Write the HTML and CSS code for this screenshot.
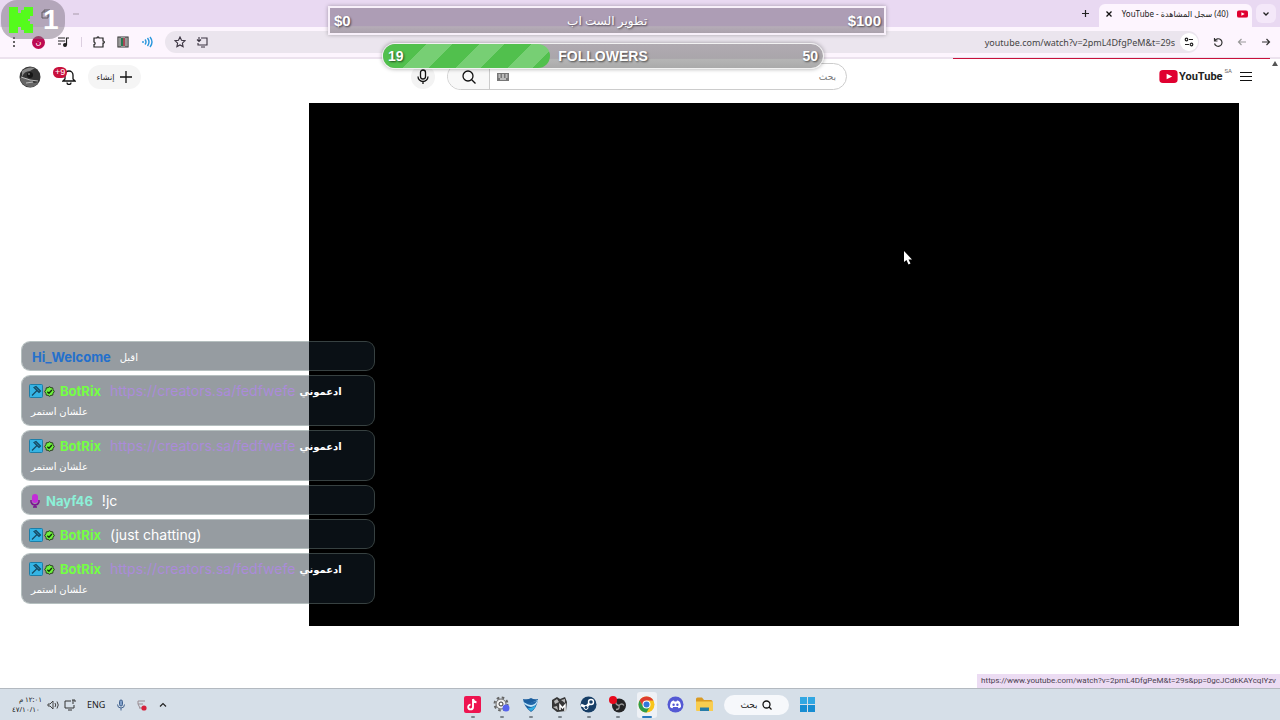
FILE: index.html
```
<!DOCTYPE html>
<html lang="ar">
<head>
  <meta charset="UTF-8" />
  <title>(40) سجل المشاهدة - YouTube</title>
  <link rel="stylesheet" href="styles.css">
</head>
<body>

<!-- shared icons -->
<svg class="defs" width="0" height="0" aria-hidden="true">
  <symbol id="hammer" viewBox="0 0 14 14">
    <rect x=".5" y=".5" width="13" height="13" rx="1" fill="#35b4e4" stroke="#1c7ea8"/>
    <path d="M3 11.500l5-5M5 3.500l2-1 4.500 4.500-1.500 1.500L8 6.500z" stroke="#174a63" stroke-width="1.200" fill="#2584ab"/>
  </symbol>
  <symbol id="check" viewBox="0 0 12 12">
    <path d="M6 .8l1.600 1 1.900.2.4 1.900L11.200 6 9.900 8.100l-.4 1.900-1.900.2-1.600 1-1.600-1-1.900-.2-.4-1.900L.8 6l1.300-2.100.4-1.900 1.900-.2z" fill="#6df03c" stroke="#1f3316" stroke-width="1"/>
    <path d="M3.600 6.200l1.800 1.700 3.200-3.600" fill="none" stroke="#16300c" stroke-width="1.500"/>
  </symbol>
  <symbol id="ytmark" viewBox="0 0 20 14">
    <rect width="20" height="14" rx="4" fill="#e00030"/>
    <path d="M8 4l6 3-6 3z" fill="#fff"/>
  </symbol>
</svg>

<div class="desktop">
  <div class="tabstrip">
    <div class="window-controls">
      <svg width="10" height="10" viewBox="0 0 10 10"><path d="M1 3h6v6H1zM3 3V1h6v6H7" fill="none" stroke="#444"/></svg>
      <svg width="8" height="10" viewBox="0 0 8 10"><path d="M1 5h6" stroke="#a89bab"/></svg>
    </div>
    <button class="new-tab" aria-label="علامة تبويب جديدة"><svg width="9" height="9" viewBox="0 0 9 9"><path d="M4.500 1v7M1 4.500h7" stroke="#222" stroke-width="1.200"/></svg></button>
    <div class="tab">
      <button aria-label="إغلاق"><svg width="8" height="8" viewBox="0 0 8 8"><path d="M1.500 1.500l5 5M6.500 1.500l-5 5" stroke="#111" stroke-width="1.300"/></svg></button>
      <span class="tab-title" dir="rtl">(40) سجل المشاهدة - YouTube</span>
      <svg width="11" height="8" viewBox="0 0 20 14"><use href="#ytmark"/></svg>
    </div>
    <button class="tab-search" aria-label="بحث في علامات التبويب"><svg width="8" height="6" viewBox="0 0 8 6"><path d="M1.500 1.500L4 4l2.500-2.500" fill="none" stroke="#222" stroke-width="1.300"/></svg></button>
  </div>

  <div class="toolbar">
    <div class="extensions">
      <svg width="12" height="12" viewBox="0 0 12 12" fill="#333"><circle cx="6" cy="2" r="1"/><circle cx="6" cy="6" r="1"/><circle cx="6" cy="10" r="1"/></svg>
      <span class="profile">ن</span>
      <svg width="12" height="12" viewBox="0 0 12 12" fill="none" stroke="#222" stroke-width="1.200"><path d="M1 2h7M1 5h7M1 8h3M9.500 9V2H12"/><circle cx="8" cy="9" r="1.400" fill="#222"/></svg>
      <span class="divider"></span>
      <svg width="12" height="12" viewBox="0 0 12 12"><path d="M1 2h3c0-1.500 2-1.500 2 0h4v3c1.800 0 1.800 2.200 0 2.200V11H1V8.500c1.500 0 1.500-2.500 0-2.500z" fill="none" stroke="#222" stroke-width="1.200"/></svg>
      <svg width="12" height="12" viewBox="0 0 12 12"><path d="M1 1h10v10H1z" fill="#fff" stroke="#333" stroke-width="1.200"/><path d="M3 1v10M9 1v10" stroke="#333"/><path d="M4 2h2v8H4z" fill="#257a52"/><path d="M6 2h2v8H6z" fill="#a64858"/></svg>
      <svg width="12" height="12" viewBox="0 0 12 12" fill="none" stroke="#2997dc" stroke-width="1.400"><path d="M2 5v2M4 3.500q2 2.500 0 5M6.500 2q3 4 0 8M9 1q4 5 0 10"/></svg>
    </div>
    <div class="address">
      <svg width="12" height="12" viewBox="0 0 12 12"><path d="M6 1l1.500 3.300 3.500.4-2.600 2.400.7 3.500L6 8.900l-3.100 1.700.7-3.500L1 4.700l3.500-.4z" fill="none" stroke="#3a3340" stroke-width="1.100"/></svg>
      <svg width="12" height="12" viewBox="0 0 12 12" fill="none" stroke="#3a3340" stroke-width="1.100"><path d="M5 2h6v7H2V7M3 1v4M1 3.500L3 5.500l2-2M5 11h4"/></svg>
      <input class="url" type="text" dir="ltr" aria-label="عنوان الموقع" value="youtube.com/watch?v=2pmL4DfgPeM&amp;t=29s">
      <button class="site-info" aria-label="معلومات الموقع"><svg width="10" height="10" viewBox="0 0 10 10" fill="none" stroke="#222" stroke-width="1.200"><circle cx="2.500" cy="2.500" r="1.300"/><path d="M5 2.500h4M1 7.500h4"/><circle cx="7.500" cy="7.500" r="1.300"/></svg></button>
    </div>
    <div class="nav">
      <button aria-label="إعادة تحميل"><svg width="10" height="10" viewBox="0 0 10 10" fill="none" stroke="#333" stroke-width="1.200"><path d="M1.500 1v3h3M1.800 3.800A3.800 3.800 0 1 1 1.500 6.500"/></svg></button>
      <button aria-label="التالي"><svg width="10" height="10" viewBox="0 0 10 10" fill="none" stroke="#999" stroke-width="1.200"><path d="M9 5H1.500M4.500 2l-3 3 3 3"/></svg></button>
      <button aria-label="السابق"><svg width="10" height="10" viewBox="0 0 10 10" fill="none" stroke="#333" stroke-width="1.200"><path d="M1 5h7.500M5.500 2l3 3-3 3"/></svg></button>
    </div>
  </div>

  <main class="page">
    <div class="loading"></div>
    <svg class="scroll-up" width="6" height="5" viewBox="0 0 6 5"><path d="M3 0l3 5H0z" fill="#555"/></svg>
    <header class="masthead">
      <svg class="avatar" width="22" height="22" viewBox="0 0 22 22">
        <circle cx="11" cy="11" r="10.500" fill="#343434"/>
        <path d="M3 5q6-5 13-3l-5 3q-6 0-8 6z" fill="#8a8a8a"/>
        <path d="M1 12q9-1 14 5l5-1q-4 6-10 5-8-2-9-9z" fill="#666"/>
        <path d="M2 11l9 3 8 1M7 17l7-1" stroke="#bbb" fill="none"/>
        <circle cx="11" cy="9" r="3" fill="#161616"/><circle cx="10" cy="8" r="1" fill="#777"/>
      </svg>
      <button class="bell" aria-label="الإشعارات">
        <svg width="14" height="16" viewBox="0 0 14 16" fill="none" stroke="#111" stroke-width="1.300"><path d="M1 12l2-2V6a4 4 0 0 1 8 0v4l2 2zM5 13.500a2 2 0 0 0 4 0"/></svg>
        <span class="badge">9+</span>
      </button>
      <button class="create"><span>إنشاء</span><svg width="12" height="12" viewBox="0 0 12 12"><path d="M6 0v12M0 6h12" stroke="#111" stroke-width="1.300"/></svg></button>
      <div class="search">
        <button class="mic" aria-label="بحث صوتي"><svg width="12" height="16" viewBox="0 0 12 16" fill="none" stroke="#111" stroke-width="1.300"><rect x="3.500" y="1" width="5" height="9" rx="2.500"/><path d="M1 7.500a5 5 0 0 0 10 0M6 12.500V15"/></svg></button>
        <form class="searchbox">
          <button type="button" aria-label="بحث"><svg width="14" height="14" viewBox="0 0 14 14" fill="none" stroke="#111" stroke-width="1.300"><circle cx="6" cy="6" r="5"/><path d="M9.700 9.700L13.500 13.500"/></svg></button>
          <svg width="12" height="8" viewBox="0 0 12 8"><rect width="12" height="8" fill="#777"/><path d="M1.500 2h2M5 2h2M8.500 2h2M1.500 4h2M5 4h2M8.500 4h2M3 6h6" stroke="#fff"/></svg>
          <input type="text" dir="rtl" placeholder="بحث" aria-label="بحث">
        </form>
      </div>
      <a class="logo" href="#">
        <svg width="19" height="13" viewBox="0 0 20 14"><use href="#ytmark"/></svg>
        <span class="wordmark">YouTube</span><sup>SA</sup>
      </a>
      <button class="guide" aria-label="الدليل"><svg width="12" height="11" viewBox="0 0 12 11"><path d="M0 1.500h12M0 5.500h12M0 9.500h12" stroke="#111"/></svg></button>
    </header>
    <div class="player"></div>
    <div class="status">https://www.youtube.com/watch?v=2pmL4DfgPeM&amp;t=29s&amp;pp=0gcJCdkKAYcqIYzv</div>
  </main>

  <footer class="taskbar">
    <div class="tray">
      <div class="clock"><span dir="rtl">١٢:٠١ م</span><span>٤٧/١٠/١٠</span></div>
      <svg width="12" height="10" viewBox="0 0 12 10" fill="none" stroke="#444"><path d="M1 4h2l3-3v8L3 6H1zM8 3q1.500 2 0 4M10 1.500q2.500 3.500 0 7"/></svg>
      <svg width="12" height="12" viewBox="0 0 12 12" fill="none" stroke="#333"><path d="M7 2H1v7h9V6M4 11h4M9 1v4M8 1h3v2"/></svg>
      <span class="lang">ENG</span>
      <svg class="traymic" width="10" height="12" viewBox="0 0 10 12" fill="none" stroke="#41628f"><rect x="3.500" y="1" width="3" height="6" rx="1.500" fill="#7e9dc7"/><path d="M1.500 5.500a3.500 3.500 0 0 0 7 0M5 9v2.500"/></svg>
      <svg width="12" height="12" viewBox="0 0 12 12"><path d="M2 2h7M2 5h5M3 9h4M2 2v3l2 4" stroke="#9a8d93" fill="none"/><circle cx="8" cy="9" r="2.600" fill="#d6203a"/></svg>
      <svg class="chevron" width="8" height="6" viewBox="0 0 8 6"><path d="M1 4.500L4 1.500l3 3" fill="none" stroke="#222" stroke-width="1.200"/></svg>
    </div>
    <nav class="apps">
      <button class="open" aria-label="TikTok"><svg width="17" height="17" viewBox="0 0 17 17"><rect width="17" height="17" rx="2" fill="#ee1450"/><path d="M9 3v8a2.400 2.400 0 1 1-2.400-2.400M9 3q.5 3 3.500 3.200" fill="none" stroke="#fff" stroke-width="1.900"/></svg></button>
      <button class="open" aria-label="Settings"><svg width="17" height="17" viewBox="0 0 17 17"><circle cx="8" cy="8" r="6.500" fill="none" stroke="#666" stroke-width="2" stroke-dasharray="2.600 2.500"/><circle cx="8" cy="8" r="5" fill="#eee" stroke="#666"/><circle cx="8" cy="8" r="2" fill="#fff" stroke="#333"/><circle cx="13" cy="12" r="3.500" fill="#5664ee"/></svg></button>
      <button class="open" aria-label="Shield"><svg width="17" height="17" viewBox="0 0 17 17"><path d="M1 3q5 1 8-1 3 2 7 1-1 9-7 13Q2 11 1 3z" fill="#1b5e9e"/><path d="M0 5q5 4 9 2t7-3q-1 6-7 7-6-1-9-6z" fill="#bfe5fa"/><path d="M3 6q4 2 7 0 3-1 5-1-2 4-6 4-4 0-6-3z" fill="#2267a8"/><path d="M5 12q5 1 9-3-1 4-5 6z" fill="#32b0e4"/></svg></button>
      <button class="open" aria-label="Game"><svg width="17" height="17" viewBox="0 0 17 17"><path d="M1 4l5-3 3 2 5-2 2 5-1 9-9 1-5-4z" fill="#363636"/><path d="M3 5l3-2 2 3-4 2zM10 4l4-1v4zM2 11l4-1 1 4z" fill="#b9b9b9"/><path d="M9 14V9l2.500 3L14 9v6" stroke="#fff" stroke-width="1.500" fill="none"/></svg></button>
      <button class="open" aria-label="Steam"><svg width="17" height="17" viewBox="0 0 17 17"><circle cx="8.500" cy="8.500" r="8" fill="#173e66"/><path d="M1 9l5 2 4-4" stroke="#fff" stroke-width="2.500" fill="none"/><circle cx="11" cy="6" r="2.500" fill="#173e66" stroke="#fff" stroke-width="1.400"/><circle cx="6" cy="11.500" r="2" fill="#173e66" stroke="#fff"/></svg></button>
      <button class="open" aria-label="OBS"><svg width="17" height="17" viewBox="0 0 17 17"><circle cx="10" cy="9.500" r="7" fill="#242426"/><path d="M10 9.500q-4-1-3-4M10 9.500q3-3 5 0M10 9.500q1 4-3 4" fill="none" stroke="#9a9a9a" stroke-width="1.300"/><circle cx="4" cy="4" r="4" fill="#e8091c"/></svg></button>
      <button class="open active" aria-label="Chrome"><svg width="17" height="17" viewBox="0 0 17 17"><circle cx="8.500" cy="8.500" r="8" fill="#f8c51c"/><path d="M1.600 4.500a8 8 0 0 1 13.800 0H8.500L5 10.500z" fill="#dd3c30"/><path d="M1.600 4.500a8 8 0 0 0 6.900 12l3.500-6H5z" fill="#2d9c4c"/><circle cx="8.500" cy="8.500" r="4" fill="#fff"/><circle cx="8.500" cy="8.500" r="3" fill="#3377dc"/></svg></button>
      <button aria-label="Discord"><svg width="17" height="17" viewBox="0 0 17 17"><circle cx="8.500" cy="8.500" r="8" fill="#5459d4"/><path d="M4 6q2-1.500 3-1.400l.5.800h2l.5-.8q1-.1 3 1.400 1 2.500 1 5-1.500 1.300-2.500 1.200l-.7-1.200H6.200l-.7 1.200Q4.500 12.300 3 11q0-2.500 1-5z" fill="#fff"/><circle cx="6.600" cy="8.700" r="1.200" fill="#5459d4"/><circle cx="10.400" cy="8.700" r="1.200" fill="#5459d4"/></svg></button>
      <button aria-label="Explorer"><svg width="17" height="17" viewBox="0 0 17 17"><path d="M0 3q0-1.500 1.500-1.500H6L8 4h7q1.500 0 1.500 1.500V14H0z" fill="#d99a22"/><path d="M0 5.500h17V15H1q-1 0-1-1z" fill="#f8cd50"/><path d="M4 15v-3.500h9V15z" fill="#267ca8"/></svg></button>
      <button class="find"><span>بحث</span><svg width="10" height="10" viewBox="0 0 10 10" fill="none" stroke="#111" stroke-width="1.300"><circle cx="4.500" cy="4.500" r="3.500"/><path d="M7 7L9.500 9.500"/></svg></button>
      <button aria-label="Start"><svg width="17" height="17" viewBox="0 0 17 17" fill="#178dd2"><path d="M1 1h7v7H1zM9 1h7v7H9z" fill="#32a7e2"/><path d="M1 9h7v7H1zM9 9h7v7H9z"/></svg></button>
    </nav>
  </footer>
</div>

<!-- stream overlays -->
<div class="kick">
  <svg width="26" height="28" viewBox="0 0 26 28"><path d="M1 1h9v6h3V4h3V1h9v9h-3v3h-2v2h2v3h3v9h-9v-3h-3v-3h-3v6H1z" fill="#55fb1c"/></svg>
  <span>1</span>
</div>

<div class="goal">
  <span>$0</span><span class="goal-name" dir="rtl">تطوير الست اب</span><span>$100</span>
</div>

<div class="followers">
  <div class="fill"></div>
  <span>19</span><span>FOLLOWERS</span><span>50</span>
</div>

<div class="chat">
  <div class="msg plain"><b class="blue">Hi_Welcome</b><span class="ar">اقبل</span></div>
  <div class="msg">
    <svg width="14" height="14"><use href="#hammer"/></svg><svg class="check" width="11" height="11"><use href="#check"/></svg>
    <b class="green">BotRix</b><a href="#">https://creators.sa/fedfwefe</a><span class="ar bold">ادعموني</span>
    <div class="ar second">علشان استمر</div>
  </div>
  <div class="msg">
    <svg width="14" height="14"><use href="#hammer"/></svg><svg class="check" width="11" height="11"><use href="#check"/></svg>
    <b class="green">BotRix</b><a href="#">https://creators.sa/fedfwefe</a><span class="ar bold">ادعموني</span>
    <div class="ar second">علشان استمر</div>
  </div>
  <div class="msg">
    <svg width="12" height="14" viewBox="0 0 12 14"><rect x="3" y="0" width="6" height="9" rx="3" fill="#c32bd8"/><path d="M2 6v2q1 3 4 3t4-3V6M6 11v2M4 13h4" fill="none" stroke="#7b1390" stroke-width="1.500"/></svg>
    <b class="mint">Nayf46</b><span>!jc</span>
  </div>
  <div class="msg">
    <svg width="14" height="14"><use href="#hammer"/></svg><svg class="check" width="11" height="11"><use href="#check"/></svg>
    <b class="green">BotRix</b><span>(just chatting)</span>
  </div>
  <div class="msg">
    <svg width="14" height="14"><use href="#hammer"/></svg><svg class="check" width="11" height="11"><use href="#check"/></svg>
    <b class="green">BotRix</b><a href="#">https://creators.sa/fedfwefe</a><span class="ar bold">ادعموني</span>
    <div class="ar second">علشان استمر</div>
  </div>
</div>

<svg class="cursor" width="9" height="14" viewBox="0 0 9 14"><path d="M1 0v11l2.500-2 2 4.500 2-1L5.500 8.500H9z" fill="#fff"/></svg>

</body>
</html>
```
FILE: styles.css
```
:root {
  --strip: #e9d9f2;
  --toolbar: #fdf5fe;
  --pill: #ebe5ee;
  --taskbar: #d6dfe8;
  --red: #c8103c;
  --ui: "Noto Sans", "DejaVu Sans", sans-serif;
}

* {
  box-sizing: border-box;
}

body {
  margin: 0;
  font-family: var(--ui);
  font-size: 9px;
  color: #222;
  background: #fff;
  overflow: hidden;
}

button {
  display: flex;
  align-items: center;
  justify-content: center;
  padding: 0;
  border: 0;
  background: none;
  color: inherit;
  font: inherit;
}

input {
  min-width: 0;
  padding: 0;
  border: 0;
  outline: 0;
  background: none;
  font: inherit;
}

svg {
  flex: none;
}

.defs {
  position: absolute;
}

.desktop {
  display: flex;
  flex-direction: column;
  height: 100vh;
}

/* browser */
.tabstrip {
  display: flex;
  align-items: center;
  height: 27px;
  padding: 0 4px 0 41px;
  background: var(--strip);
}

.window-controls {
  display: flex;
  gap: 21px;
  margin-right: auto;
}

.new-tab {
  width: 28px;
  height: 20px;
}

.tab {
  display: flex;
  align-items: center;
  align-self: flex-end;
  gap: 6px;
  width: 153px;
  height: 23px;
  padding: 0 4px 4px 6px;
  background: var(--toolbar);
  border-radius: 6px 6px 0 0;
}

.tab-title {
  flex: 1;
  font-size: 8px;
  white-space: nowrap;
  text-align: center;
}

.tab-search {
  width: 20px;
  height: 19px;
  margin-left: 4px;
  border-radius: 6px;
  background: #f4e8f9;
}

.toolbar {
  display: flex;
  align-items: center;
  height: 32px;
  padding: 0 9px 0 8px;
  background: var(--toolbar);
  border-bottom: 2px solid #ece2ee;
}

.extensions {
  display: flex;
  align-items: center;
  gap: 12px;
  width: 157px;
}

.profile {
  width: 13px;
  height: 13px;
  border-radius: 50%;
  background: #bd0b52;
  color: #fff;
  font-size: 8px;
  line-height: 11px;
  text-align: center;
}

.divider {
  width: 1px;
  height: 10px;
  margin-right: -1px;
  background: #dccfe0;
}

.address {
  display: flex;
  flex: 1;
  align-items: center;
  gap: 10px;
  height: 22px;
  padding: 0 1px 0 9px;
  background: var(--pill);
  border-radius: 11px;
}

.url {
  flex: 1;
  margin-right: -5px;
  color: #444;
  text-align: right;
}

.site-info {
  width: 18px;
  height: 18px;
  border-radius: 50%;
  background: #fff;
}

.nav {
  display: flex;
  gap: 14px;
  padding-left: 14px;
}

/* youtube page */
.page {
  position: relative;
  flex: 1;
  min-height: 0;
}

.loading {
  position: absolute;
  top: -1px;
  right: 10px;
  left: 953px;
  height: 1px;
  background: var(--red);
}

.scroll-up {
  position: absolute;
  top: 2px;
  right: 2px;
}

.masthead {
  display: flex;
  align-items: center;
  height: 44px;
  padding: 0 28px 9px 19px;
}

.bell {
  position: relative;
  margin-left: 21px;
}

.badge {
  position: absolute;
  top: -2px;
  left: -9px;
  padding: 0 2px;
  border-radius: 6px;
  background: var(--red);
  color: #fff;
  font: 9px/11px "Liberation Sans", sans-serif;
  direction: rtl;
}

.create {
  gap: 6px;
  width: 53px;
  height: 24px;
  margin-left: 12px;
  border-radius: 12px;
  background: #f5f5f5;
}

.create span {
  font-size: 8px;
}

.search {
  display: flex;
  align-items: center;
  gap: 12px;
  margin: 0 auto 0 270px;
}

.mic {
  width: 24px;
  height: 24px;
  border-radius: 50%;
  background: #f3f3f3;
}

.searchbox {
  display: flex;
  align-items: center;
  width: 400px;
  height: 27px;
  border: 1px solid #ccc;
  border-radius: 14px;
  overflow: hidden;
}

.searchbox button {
  width: 42px;
  height: 27px;
  margin-right: 7px;
  border-right: 1px solid #ccc;
  background: #f8f8f8;
}

.searchbox input {
  flex: 1;
  padding-right: 10px;
}

.searchbox input::placeholder {
  color: #777;
}

.logo {
  display: flex;
  align-items: center;
  gap: 1px;
  color: #222;
  text-decoration: none;
}

.wordmark {
  font: bold 11px/14px Roboto, sans-serif;
}

.logo sup {
  align-self: flex-start;
  margin: -2px 0 0 1px;
  font: 6px/6px Roboto, sans-serif;
  color: #666;
}

.guide {
  margin-left: 8px;
}

.player {
  margin: 0 41px 0 309px;
  aspect-ratio: 16 / 9;
  background: #000;
}

.status {
  position: absolute;
  right: 0;
  bottom: 0;
  padding: 0 4px;
  background: #ecdcf3;
  color: #4b4050;
  font: 8px/14px Roboto, sans-serif;
}

/* windows taskbar */
.taskbar {
  display: grid;
  grid-template-columns: 1fr auto 1fr;
  align-items: center;
  height: 32px;
  background: var(--taskbar);
  border-top: 1px solid #b3b9c0;
}

.tray {
  display: flex;
  align-items: center;
  gap: 5px;
  padding-left: 12px;
}

.clock {
  display: flex;
  flex-direction: column;
  width: 30px;
  font-size: 7px;
  line-height: 10px;
}

.lang {
  margin: 0 6px;
}

.traymic {
  margin-right: 5px;
}

.chevron {
  margin-left: 6px;
}

.apps {
  display: flex;
  align-items: center;
  gap: 9px;
}

.apps button {
  position: relative;
  width: 20px;
  height: 26px;
}

.apps .open::after {
  content: "";
  position: absolute;
  bottom: 0;
  width: 4px;
  height: 2px;
  border-radius: 1px;
  background: #7c858e;
}

.apps .active {
  background: #eef1f6;
  border-radius: 3px;
}

.apps .active::after {
  width: 10px;
  background: #2878c0;
}

.apps .find {
  gap: 4px;
  width: 65px;
  height: 20px;
  border-radius: 10px;
  background: #f6f8fb;
}

/* overlays */
.kick {
  position: absolute;
  top: 0;
  left: 1px;
  display: flex;
  align-items: center;
  gap: 9px;
  width: 64px;
  height: 39px;
  padding-left: 7px;
  border-radius: 16px;
  background: rgba(125, 115, 130, 0.5);
  color: #fff;
  font: bold 28px/38px "Liberation Sans", sans-serif;
}

.goal,
.followers {
  position: absolute;
  display: flex;
  align-items: center;
  justify-content: space-between;
  color: #fff;
  text-shadow: 1px 1px 2px rgba(0, 0, 0, 0.6);
}

.goal {
  top: 6px;
  left: 328px;
  width: 558px;
  height: 29px;
  padding: 0 3px 0 4px;
  border: 2px solid #f8f0fa;
  background: linear-gradient(#ad9db5 70%, #b5acb7 75%, #aaa1ac);
  box-shadow: 0 0 4px rgba(0, 0, 0, 0.3);
  font: bold 15px/16px "Liberation Sans", "DejaVu Sans", sans-serif;
}

.goal-name {
  margin-left: 16px;
  font-size: 12px;
  font-weight: normal;
}

.followers {
  top: 43px;
  left: 382px;
  width: 442px;
  height: 26px;
  padding: 0 5px;
  border: 1px solid #f2f2f2;
  border-radius: 13px;
  background: linear-gradient(#b0aab1, #aaa6ab 60%, #b5b5b5 65%, #aaa);
  box-shadow: 0 0 4px rgba(0, 0, 0, 0.35);
  font: bold 14px/16px "Liberation Sans", sans-serif;
}

.followers span {
  position: relative;
}

.fill {
  position: absolute;
  top: 0;
  bottom: 0;
  left: 0;
  width: 38%;
  border-radius: 12px;
  background: linear-gradient(135deg,
    #51c04d 31px,
    #77cf74 31px 49px,
    #51c04d 49px 68px,
    #77cf74 68px 86px,
    #51c04d 86px 105px,
    #77cf74 105px 123px,
    #51c04d 123px);
}

.chat {
  position: absolute;
  top: 341px;
  left: 21px;
  display: flex;
  flex-direction: column;
  gap: 4px;
  width: 354px;
  color: #fff;
  font: 14px/20px Inter, "DejaVu Sans", sans-serif;
}

.msg {
  display: flex;
  flex-wrap: wrap;
  align-items: center;
  padding: 5px 6px 3px 7px;
  border: 1px solid rgba(110, 130, 130, 0.5);
  border-radius: 9px;
  background: rgba(22, 36, 46, 0.45);
  background-clip: padding-box;
}

.msg b {
  margin: 0 9px 0 5px;
  font-size: 13px;
}

.msg.plain b {
  margin-left: 3px;
}

.msg .check {
  margin-left: 1px;
}

.msg a {
  color: #ab8bda;
  text-decoration: none;
}

.msg .ar {
  font-size: 10px;
}

.msg .bold {
  margin-left: 4px;
  font-weight: bold;
}

.msg .second {
  flex-basis: 100%;
  padding: 0 0 1px 2px;
}

.blue {
  color: #2470cc;
}

.green {
  color: #74ff43;
}

.mint {
  color: #8cf0d8;
}

.cursor {
  position: absolute;
  top: 251px;
  left: 903px;
}
```
